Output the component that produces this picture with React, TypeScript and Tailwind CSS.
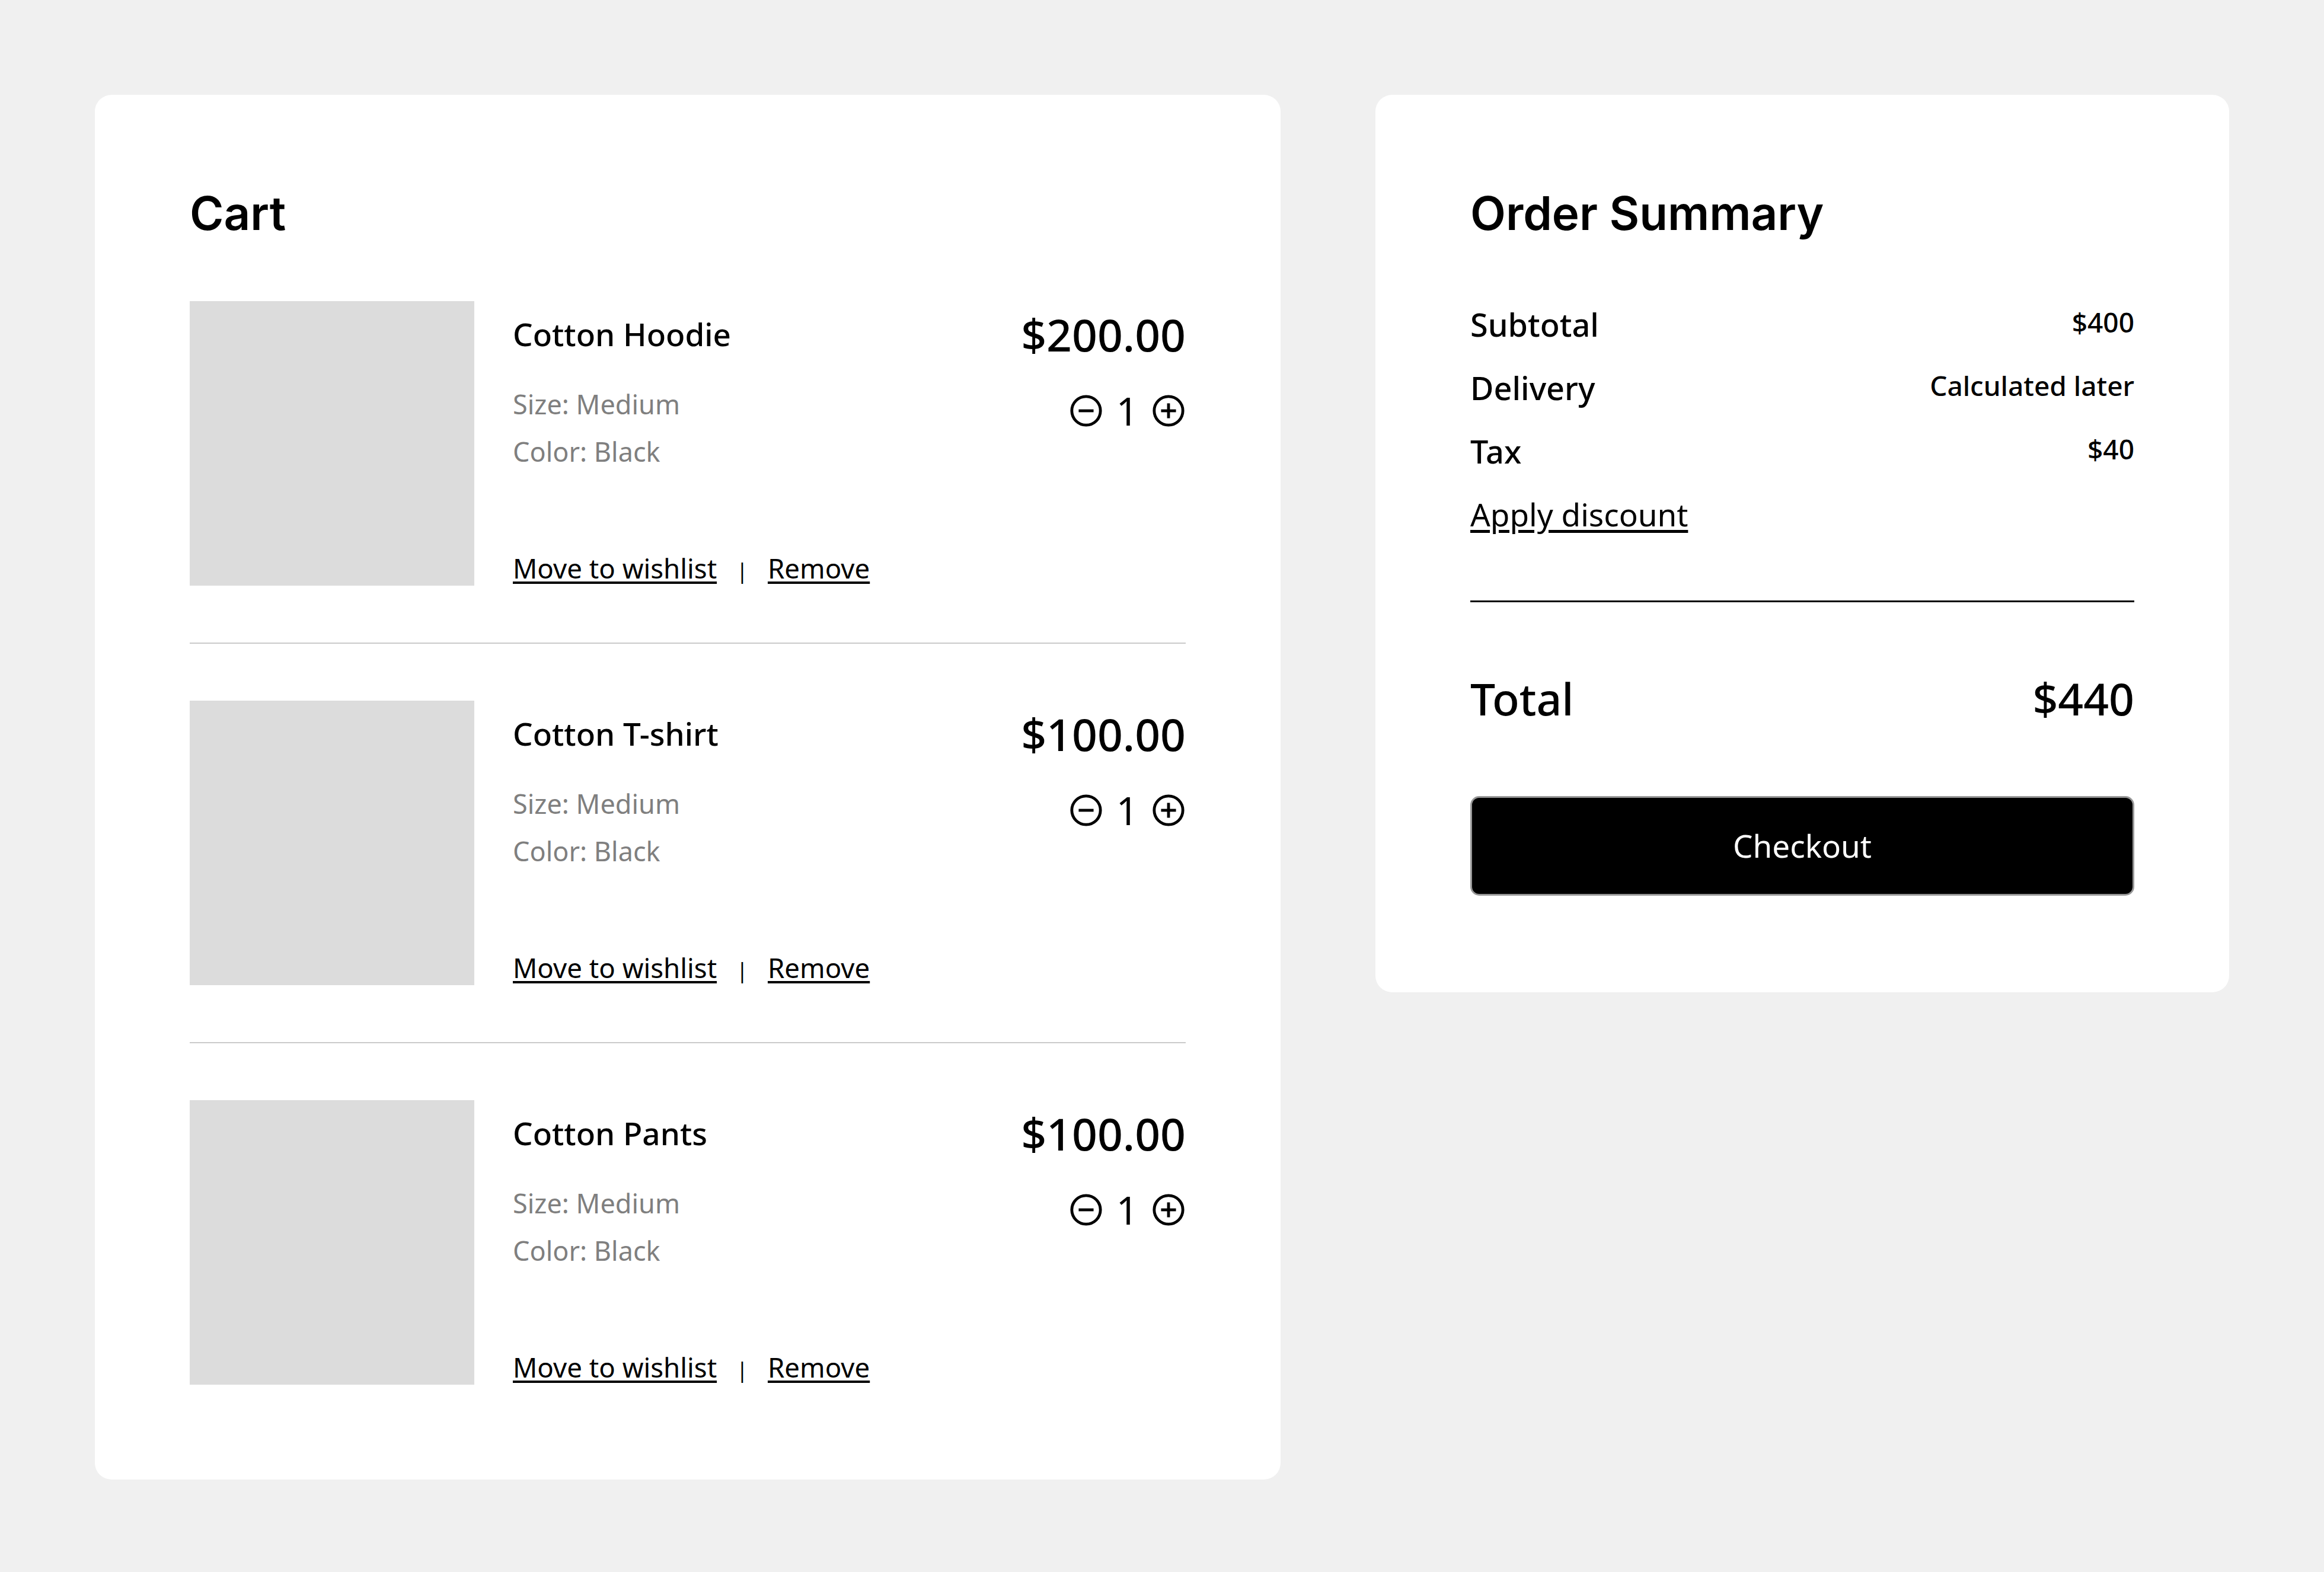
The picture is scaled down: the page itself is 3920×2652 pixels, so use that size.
import React from "react";

interface CartItem {
  id: number;
  name: string;
  price: string;
  size: string;
  color: string;
  qty: number;
}

const items: CartItem[] = [
  { id: 1, name: "Cotton Hoodie", price: "$200.00", size: "Medium", color: "Black", qty: 1 },
  { id: 2, name: "Cotton T-shirt", price: "$100.00", size: "Medium", color: "Black", qty: 1 },
  { id: 3, name: "Cotton Pants", price: "$100.00", size: "Medium", color: "Black", qty: 1 },
];

const body = { fontFamily: '"Noto Sans", "Open Sans", sans-serif' };
const heading = { fontFamily: 'Inter, Roboto, "Liberation Sans", sans-serif' };

const CircleIcon: React.FC<{ plus?: boolean }> = ({ plus }) => (
  <svg width="58" height="58" viewBox="0 0 24 24" fill="none" stroke="black" strokeWidth="2">
    <circle cx="12" cy="12" r="10" />
    <path d="M6.8 12h10.4" />
    {plus && <path d="M12 6.8v10.4" />}
  </svg>
);

const CartRow: React.FC<{ item: CartItem; last: boolean; first: boolean }> = ({ item, last, first }) => (
  <div
    className={`flex gap-[65px] ${first ? "" : "pt-[96px]"} ${
      last ? "" : "pb-[96px] border-b-2 border-[#cacaca]"
    }`}
  >
    <div className="w-[480px] h-[480px] shrink-0 bg-[#dcdcdc]" />
    <div className="flex-1 flex flex-col">
      <div className="flex justify-between">
        <div>
          <div className="h-[112px] flex items-center text-[53px] font-medium text-black">{item.name}</div>
          <div className="mt-[22px] text-[45px] leading-[80px] text-[#7f7f7f]">Size: {item.size}</div>
          <div className="text-[45px] leading-[80px] text-[#7f7f7f]">Color: {item.color}</div>
        </div>
        <div className="flex flex-col items-end">
          <div className="text-[75px] leading-[112px] font-medium text-black">{item.price}</div>
          <div className="mt-[44px] flex items-center gap-[22px]">
            <CircleIcon />
            <span className="text-[65px] leading-[58px] text-black">{item.qty}</span>
            <CircleIcon plus />
          </div>
        </div>
      </div>
      <div className="mt-auto mb-[-2px] flex items-baseline text-[45.6px] leading-[55px] text-black">
        <a className="underline underline-offset-[5px] cursor-pointer">Move to wishlist</a>
        <span className="mx-[33px] text-[36px] text-black">|</span>
        <a className="underline underline-offset-[5px] cursor-pointer">Remove</a>
      </div>
    </div>
  </div>
);

const SummaryRow: React.FC<{ label: string; value: string }> = ({ label, value }) => (
  <div className="flex justify-between items-start font-medium">
    <span className="text-[54px] leading-[82px]">{label}</span>
    <span className="text-[46px] leading-[74px]">{value}</span>
  </div>
);

export default function App() {
  return (
    <div className="min-h-screen bg-[#f0f0f0] p-[160px] flex items-start gap-[160px]" style={body}>
      <div className="w-[2000px] bg-white rounded-[28px] p-[160px]">
        <h1 className="text-[78px] leading-[80px] font-semibold text-black mb-[108px]" style={heading}>
          Cart
        </h1>
        <div>
          {items.map((item, idx) => (
            <CartRow key={item.id} item={item} first={idx === 0} last={idx === items.length - 1} />
          ))}
        </div>
      </div>

      <div className="w-[1440px] bg-white rounded-[28px] p-[160px] text-black">
        <h2 className="text-[78px] leading-[80px] font-semibold mb-[106px]" style={heading}>
          Order Summary
        </h2>
        <div className="flex flex-col gap-[25px]">
          <SummaryRow label="Subtotal" value="$400" />
          <SummaryRow label="Delivery" value="Calculated later" />
          <SummaryRow label="Tax" value="$40" />
          <a className="text-[53px] leading-[82px] underline underline-offset-[6px] cursor-pointer self-start">
            Apply discount
          </a>
        </div>
        <div className="mt-[104px] border-t-[3px] border-black" />
        <div className="mt-[106px] flex justify-between items-center font-medium">
          <span className="text-[75px] leading-[112px]">Total</span>
          <span className="text-[75px] leading-[112px]">$440</span>
        </div>
        <button className="mt-[109px] mb-[3px] w-full h-[168px] bg-black border-[3px] border-[#979797] rounded-[15px] text-white text-[53px]">
          Checkout
        </button>
      </div>
    </div>
  );
}
